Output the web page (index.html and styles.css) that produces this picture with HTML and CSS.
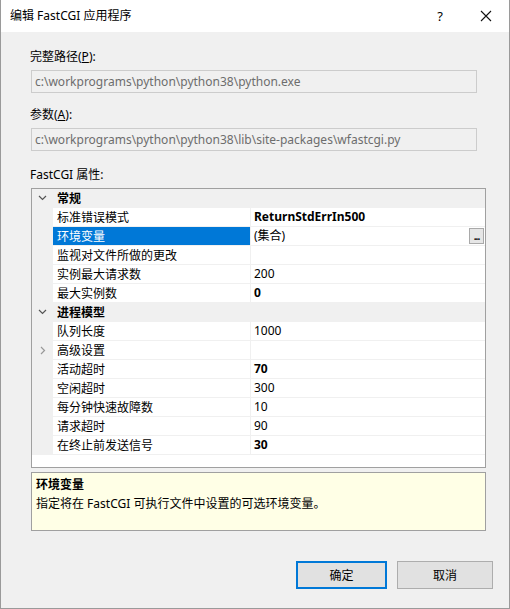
FILE: index.html
```html
<!DOCTYPE html>
<html lang="zh-CN">
<head>
    <meta charset="UTF-8">
    <title>编辑 FastCGI 应用程序</title>
    <link rel="stylesheet" href="styles.css">
</head>
<body>
<div class="window">
    <div class="titlebar">
        <span class="title">编辑 FastCGI 应用程序</span>
        <span class="help">?</span>
        <span class="close">
            <svg width="12" height="12" viewBox="0 0 12 12"><path d="M1 1 L11 11 M11 1 L1 11" stroke="#111" stroke-width="1.1" fill="none"/></svg>
        </span>
    </div>

    <div class="content">
        <div class="field-label">完整路径(<u>P</u>):</div>
        <div class="textbox">c:\workprograms\python\python38\python.exe</div>

        <div class="field-label second">参数(<u>A</u>):</div>
        <div class="textbox">c:\workprograms\python\python38\lib\site-packages\wfastcgi.py</div>

        <div class="field-label third">FastCGI 属性:</div>
        <div class="grid">
            <div class="category">
                <span class="gutter"><svg width="9" height="6" viewBox="0 0 9 6"><path d="M1 1 L4.5 4.5 L8 1" stroke="#555" stroke-width="1.2" fill="none"/></svg></span>
                <span class="cat-name">常规</span>
            </div>
            <div class="row">
                <span class="gutter"></span>
                <span class="name">标准错误模式</span>
                <span class="value bold">ReturnStdErrIn500</span>
            </div>
            <div class="row">
                <span class="gutter"></span>
                <span class="name selected">环境变量</span>
                <span class="value">(集合)<span class="dots">...</span></span>
            </div>
            <div class="row">
                <span class="gutter"></span>
                <span class="name">监视对文件所做的更改</span>
                <span class="value"></span>
            </div>
            <div class="row">
                <span class="gutter"></span>
                <span class="name">实例最大请求数</span>
                <span class="value">200</span>
            </div>
            <div class="row">
                <span class="gutter"></span>
                <span class="name">最大实例数</span>
                <span class="value bold">0</span>
            </div>
            <div class="category">
                <span class="gutter"><svg width="9" height="6" viewBox="0 0 9 6"><path d="M1 1 L4.5 4.5 L8 1" stroke="#555" stroke-width="1.2" fill="none"/></svg></span>
                <span class="cat-name">进程模型</span>
            </div>
            <div class="row">
                <span class="gutter"></span>
                <span class="name">队列长度</span>
                <span class="value">1000</span>
            </div>
            <div class="row">
                <span class="gutter"><svg width="6" height="9" viewBox="0 0 6 9"><path d="M1 1 L4.5 4.5 L1 8" stroke="#999" stroke-width="1.2" fill="none"/></svg></span>
                <span class="name">高级设置</span>
                <span class="value"></span>
            </div>
            <div class="row">
                <span class="gutter"></span>
                <span class="name">活动超时</span>
                <span class="value bold">70</span>
            </div>
            <div class="row">
                <span class="gutter"></span>
                <span class="name">空闲超时</span>
                <span class="value">300</span>
            </div>
            <div class="row">
                <span class="gutter"></span>
                <span class="name">每分钟快速故障数</span>
                <span class="value">10</span>
            </div>
            <div class="row">
                <span class="gutter"></span>
                <span class="name">请求超时</span>
                <span class="value">90</span>
            </div>
            <div class="row">
                <span class="gutter"></span>
                <span class="name">在终止前发送信号</span>
                <span class="value bold">30</span>
            </div>
        </div>

        <div class="description">
            <div class="desc-title">环境变量</div>
            <div class="desc-text">指定将在 FastCGI 可执行文件中设置的可选环境变量。</div>
        </div>
    </div>

    <div class="buttons">
        <button class="btn default">确定</button>
        <button class="btn cancel">取消</button>
    </div>
</div>
</body>
</html>
```

FILE: styles.css
```css
* {
    box-sizing: border-box;
}
body {
    margin: 0;
    font-family: "Noto Sans", "Noto Sans CJK SC", sans-serif;
    font-size: 12px;
    color: #000;
}
.window {
    width: 510px;
    height: 609px;
    background-color: #f0f0f0;
    border: 1px solid #9a9a9a;
    border-top: none;
    display: flex;
    flex-direction: column;
}
.titlebar {
    height: 32px;
    background-color: #fff;
    display: flex;
    align-items: center;
    padding-left: 9px;
}
.title {
    flex-grow: 1;
    line-height: 16px;
}
.help {
    width: 46px;
    text-align: center;
    font-size: 13px;
}
.close {
    width: 46px;
    height: 32px;
    display: flex;
    align-items: center;
    justify-content: center;
}
.content {
    padding: 17px 0 0 29px;
}
.field-label {
    line-height: 16px;
    height: 16px;
}
.second {
    margin-top: 14px;
}
.third {
    margin-top: 16px;
}
.textbox {
    margin: 5px 0 0 1px;
    width: 446px;
    height: 23px;
    border: 1px solid #cccccc;
    color: #6d6d6d;
    line-height: 21px;
    padding-left: 3px;
    white-space: nowrap;
}
.grid {
    margin: 5px 0 0 1px;
    width: 455px;
    height: 280px;
    border: 1px solid #a0a0a0;
    background-color: #fff;
}
.category, .row {
    display: flex;
    height: 19px;
    line-height: 20px;
    border-bottom: 1px solid #f0f0f0;
}
.category {
    background-color: #f0f0f0;
}
.gutter {
    width: 21px;
    background-color: #f0f0f0;
    display: flex;
    align-items: center;
    justify-content: center;
}
.cat-name {
    font-weight: bold;
    padding-left: 4px;
}
.name {
    width: 198px;
    padding-left: 4px;
    border-right: 1px solid #f0f0f0;
    white-space: nowrap;
}
.name.selected {
    background-color: #0078d7;
    color: #fff;
}
.value {
    flex-grow: 1;
    padding-left: 3px;
    display: flex;
    align-items: center;
}
.bold {
    font-weight: bold;
}
.dots {
    margin-left: auto;
    margin-right: 1px;
    width: 15px;
    height: 16px;
    border: 1px solid #a9a9a9;
    background-color: #e6e6e6;
    font-size: 10px;
    font-weight: bold;
    line-height: 15px;
    text-align: center;
    letter-spacing: -1px;
}
.description {
    margin: 4px 0 0 1px;
    width: 455px;
    height: 59px;
    border: 1px solid #a0a0a0;
    background-color: #ffffe6;
    padding: 2px 0 0 4px;
    line-height: 19px;
}
.desc-title {
    font-weight: bold;
}
.buttons {
    display: flex;
    justify-content: flex-end;
    gap: 10px;
    padding: 30px 16px 0 0;
}
.btn {
    font-family: inherit;
    font-size: 12px;
    height: 28px;
    background-color: #e1e1e1;
    border: 1px solid #adadad;
    padding: 0;
}
.default {
    width: 91px;
    border: 2px solid #0078d7;
}
.cancel {
    width: 96px;
}
```
